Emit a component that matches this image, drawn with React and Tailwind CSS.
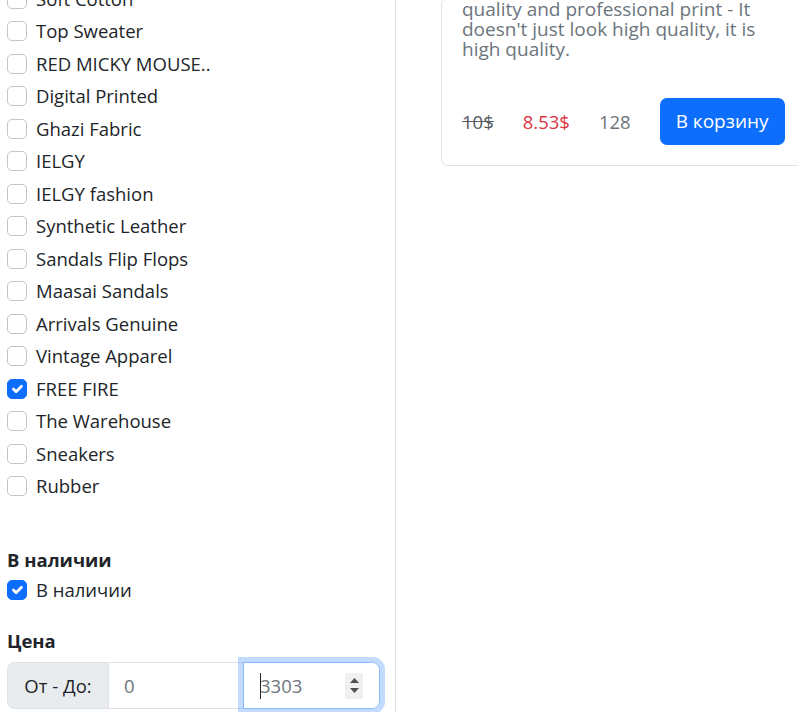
import { useState } from "react";

const brands = [
  "Soft Cotton",
  "Top Sweater",
  "RED MICKY MOUSE..",
  "Digital Printed",
  "Ghazi Fabric",
  "IELGY",
  "IELGY fashion",
  "Synthetic Leather",
  "Sandals Flip Flops",
  "Maasai Sandals",
  "Arrivals Genuine",
  "Vintage Apparel",
  "FREE FIRE",
  "The Warehouse",
  "Sneakers",
  "Rubber",
];

function Check({ checked, onChange, label }) {
  return (
    <label className="flex items-start h-[30px] mb-[2.5px] cursor-pointer">
      <span
        onClick={onChange}
        className={
          "mt-[5px] ml-[7px] w-5 h-5 shrink-0 rounded-[5px] border flex items-center justify-center " +
          (checked ? "bg-[#0d6efd] border-[#0d6efd]" : "bg-white border-[#c4c4c4]")
        }
      >
        {checked && (
          <svg width="20" height="20" viewBox="0 0 20 20">
            <path
              d="M6 10l3 3l6-6"
              fill="none"
              stroke="#fff"
              strokeWidth="3"
              strokeLinecap="round"
              strokeLinejoin="round"
            />
          </svg>
        )}
      </span>
      <span className="ml-[9px] leading-[30px]">{label}</span>
    </label>
  );
}

export default function App() {
  const [selected, setSelected] = useState({ "FREE FIRE": true });
  const [inStock, setInStock] = useState(true);

  return (
    <div
      className="flex h-[712px] overflow-hidden bg-white text-[18.5px] text-[#212529]"
      style={{ fontFamily: '"Segoe UI", "Open Sans", sans-serif' }}
    >
      {/* sidebar with filters */}
      <aside className="w-[396px] shrink-0 border-r border-[#dee2e6]">
        <div className="mt-[-16.5px]">
          {brands.map((b) => (
            <Check
              key={b}
              label={b}
              checked={!!selected[b]}
              onChange={() => setSelected({ ...selected, [b]: !selected[b] })}
            />
          ))}
        </div>

        <h6 className="mt-[44px] ml-[7px] font-bold leading-[30px]">В наличии</h6>
        <Check label="В наличии" checked={inStock} onChange={() => setInStock(!inStock)} />

        <h6 className="mt-[21px] ml-[7px] font-bold leading-[30px]">Цена</h6>
        <div className="mt-[6px] ml-[7px] w-[373px] flex h-[47px]">
          <span className="w-[102px] shrink-0 flex items-center justify-center bg-[#e9ecef] border border-[#dee2e6] rounded-l-[7.5px]">
            От - До:
          </span>
          <input
            placeholder="0"
            className="w-[134px] shrink-0 border-y border-[#dee2e6] px-[15px] outline-none placeholder:text-[#6c757d]"
          />
          <div className="relative flex-1 flex items-center border border-[#86b7fe] rounded-r-[7.5px] shadow-[0_0_0_5px_rgba(13,110,253,0.25)]">
            <span className="ml-[16px] w-px h-[26px] bg-[#212529]" />
            <span className="text-[#6c757d] -ml-px">3303</span>
            <span className="ml-auto mr-[16px] w-[18px] h-[26px] bg-[#f0f0f0] flex flex-col items-center justify-center gap-[5px]">
              <svg width="9" height="5" viewBox="0 0 9 5">
                <path d="M0 5L4.5 0L9 5z" fill="#505050" />
              </svg>
              <svg width="9" height="5" viewBox="0 0 9 5">
                <path d="M0 0L4.5 5L9 0z" fill="#505050" />
              </svg>
            </span>
          </div>
        </div>
      </aside>

      {/* product card */}
      <main className="flex-1 overflow-hidden">
        <div className="ml-[45px] w-[400px] mt-[-2px] border border-[#dee2e6] rounded-[7px] px-[20px] pb-[20px]">
          <p className="text-[19px] leading-[20px] text-[#6c757d]">
            quality and professional print - It
            <br />
            doesn't just look high quality, it is
            <br />
            high quality.
          </p>
          <div className="mt-[39px] flex items-center gap-[29px]">
            <span className="line-through text-[#555b61]">10$</span>
            <span className="text-[#dc3545]">8.53$</span>
            <span className="text-[#6c757d]">128</span>
            <button className="h-[47px] px-[16px] rounded-[7px] bg-[#0d6efd] text-white text-[19px]">
              В корзину
            </button>
          </div>
        </div>
      </main>
    </div>
  );
}
